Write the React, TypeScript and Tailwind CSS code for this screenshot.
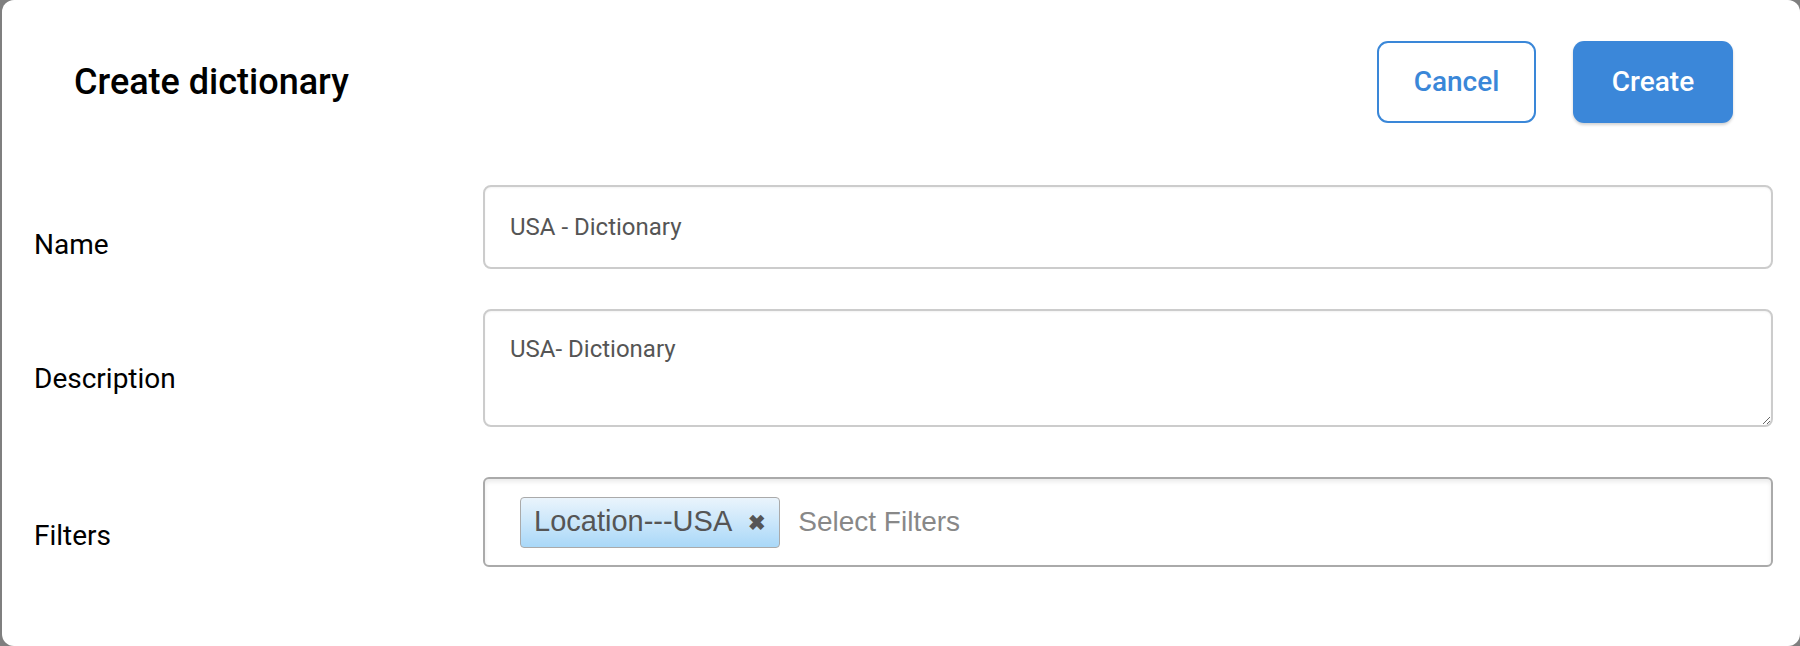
import { useState } from "react";

type FieldRowProps = {
  label: string;
  labelClass: string;
  children: React.ReactNode;
};

const FieldRow = ({ label, labelClass, children }: FieldRowProps) => (
  <div className="flex items-start">
    <label className={`w-[449px] shrink-0 text-[28px] leading-[42px] text-black ${labelClass}`}>{label}</label>
    <div className="flex-1">{children}</div>
  </div>
);

const App = () => {
  const [name, setName] = useState("USA - Dictionary");
  const [description, setDescription] = useState("USA- Dictionary");
  const [filters, setFilters] = useState<string[]>(["Location---USA"]);

  return (
    <div className="w-[1800px] h-[646px] bg-[#7f7f7f] pl-[2px] font-['Roboto',sans-serif]">
      <div className="h-full bg-white rounded-[12px] pl-[32px] pr-[27px]">
        {/* Header */}
        <div className="flex items-center justify-between pt-[41px]">
          <h1 className="pl-[40px] text-[36px] font-medium text-black leading-none">Create dictionary</h1>
          <div className="flex gap-[37px] pr-[40px]">
            <button className="w-[159px] h-[82px] rounded-[11px] border-2 border-[#3a87d8] bg-white text-[28px] font-medium text-[#3a87d8]">
              Cancel
            </button>
            <button className="w-[160px] h-[82px] rounded-[11px] bg-[#3b87d9] text-[28px] font-medium text-white shadow-[0_2px_3px_rgba(0,0,0,0.18)]">
              Create
            </button>
          </div>
        </div>

        {/* Form */}
        <div className="mt-[62px] flex flex-col">
          <FieldRow label="Name" labelClass="mt-[39px]">
            <input
              value={name}
              onChange={(e) => setName(e.target.value)}
              className="w-full h-[84px] rounded-[8px] border-2 border-[#cccccc] px-[25px] text-[24px] text-[#555] outline-none font-['Roboto',sans-serif] shadow-[inset_0_1px_2px_rgba(0,0,0,0.05)]"
            />
          </FieldRow>

          <div className="mt-[40px]">
            <FieldRow label="Description" labelClass="mt-[49px]">
              <textarea
                value={description}
                onChange={(e) => setDescription(e.target.value)}
                className="block w-full h-[118px] rounded-[8px] border-2 border-[#cccccc] px-[25px] pt-[20px] text-[24px] leading-[36px] text-[#555] outline-none font-['Roboto',sans-serif] shadow-[inset_0_1px_2px_rgba(0,0,0,0.05)]"
              />
            </FieldRow>
          </div>

          <div className="mt-[50px]">
            <FieldRow label="Filters" labelClass="mt-[38px]">
              <div className="flex items-center h-[90px] rounded-[6px] border-2 border-[#aaaaaa] pl-[35px] shadow-[inset_0_3px_4px_rgba(0,0,0,0.08)] font-['Liberation_Sans',Arial,sans-serif]">
                {filters.map((f) => (
                  <span
                    key={f}
                    className="flex items-center h-[51px] rounded-[4px] border border-[#aaaaaa] bg-gradient-to-b from-[#eaf4fc] to-[#a9d8f8] pl-[13px] pr-[13px] text-[29px] text-[#555]"
                  >
                    {f}
                    <button
                      onClick={() => setFilters(filters.filter((x) => x !== f))}
                      className="ml-[16px] text-[21px] font-bold text-[#555] leading-none"
                    >
                      ✖
                    </button>
                  </span>
                ))}
                <span className="ml-[18px] text-[28px] text-[#888]">Select Filters</span>
              </div>
            </FieldRow>
          </div>
        </div>
      </div>
    </div>
  );
};

export default App;
